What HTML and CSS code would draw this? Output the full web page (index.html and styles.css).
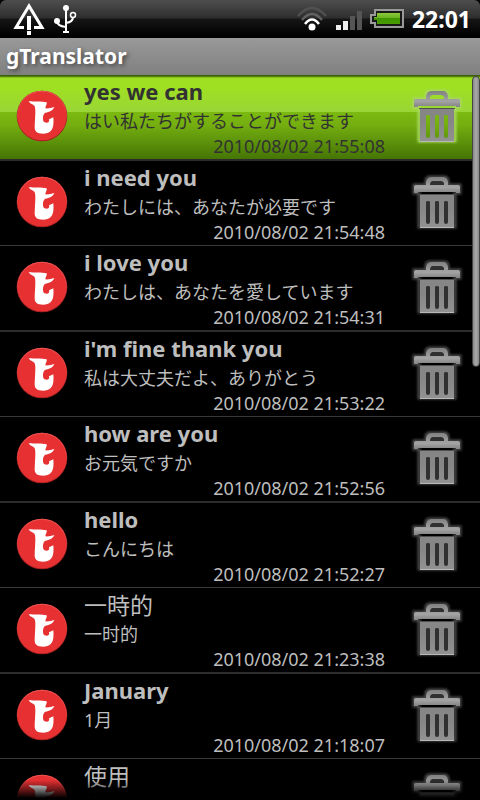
FILE: index.html
```html
<!DOCTYPE html>
<html lang="ja">
<head>
    <meta charset="UTF-8">
    <meta name="viewport" content="width=device-width, initial-scale=1.0">
    <title>gTranslator</title>
    <link rel="stylesheet" href="styles.css">
</head>
<body>

<svg class="defs" aria-hidden="true">
    <defs>
        <linearGradient id="metal" gradientUnits="userSpaceOnUse" x1="0" y1="4" x2="0" y2="55">
            <stop offset="0" stop-color="#808080"/>
            <stop offset="0.2" stop-color="#a4a4a4"/>
            <stop offset="0.3" stop-color="#868686"/>
            <stop offset="0.6" stop-color="#868686"/>
            <stop offset="1" stop-color="#929292"/>
        </linearGradient>
        <linearGradient id="level" x1="0" y1="0" x2="0" y2="1">
            <stop offset="0" stop-color="#8ac83c"/>
            <stop offset="0.5" stop-color="#68b01c"/>
            <stop offset="0.5" stop-color="#3f9400"/>
            <stop offset="1" stop-color="#489c00"/>
        </linearGradient>
        <filter id="glow" x="-20%" y="-20%" width="140%" height="140%">
            <feGaussianBlur stdDeviation="1.2"/>
        </filter>
    </defs>
    <symbol id="logo" viewBox="48 48 156 156">
        <circle cx="126" cy="126" r="76" fill="#a82020"/>
        <circle cx="126" cy="124" r="74" fill="#ec5452"/>
        <circle cx="126" cy="126" r="73" fill="#e63032"/>
        <path fill="#fff" d="M86 81 C98 84 126 80 140 85 C142 91 136 97 136 103 C146 104 154 101 163 99 C159 110 148 114 136 116 C127 121 127 142 134 145 C143 149 150 144 147 136 L160 130 C162 156 160 179 130 179 C110 179 104 172 104 160 C105 130 108 107 104 97 C101 90 90 91 86 81Z"/>
    </symbol>
    <symbol id="trash" viewBox="0 0 54 60">
        <g class="trash-glow" fill="none" stroke-width="3" filter="url(#glow)">
            <path d="M16 12 V8 Q16 4 20 4 H34 Q38 4 38 8 V12 H50 V20 H45 V54 H9 V20 H4 V12Z"/>
        </g>
        <path class="trash-hole" d="M20 8 H34 V12 H20Z M15 28 H39 V51 H15Z"/>
        <path fill="url(#metal)" fill-rule="evenodd" d="M4 20 V14 Q4 12 6 12 H16 V9 Q17 4 22 4 H33 Q37 4 38 9 V12 H48 Q50 12 50 14 V20 H46 V19 H8 V20Z M20 12 H34 V10 Q33 8 31 8 H23 Q20 8 20 12Z"/>
        <path fill="url(#metal)" fill-rule="evenodd" d="M10 22 H44 V55 H10Z M16 29 V49 Q16 51 18 51 Q20 51 20 49 V29 Q20 28 18 28 Q16 28 16 29Z M25 29 V49 Q25 51 27 51 Q29 51 29 49 V29 Q29 28 27 28 Q25 28 25 29Z M34 29 V49 Q34 51 36 51 Q38 51 38 49 V29 Q38 28 36 28 Q34 28 34 29Z"/>
        <path fill="none" stroke="#505050" d="M9 21.500 H45"/>
        <path fill="none" stroke="#b8b8b8" d="M10 54.500 H44"/>
    </symbol>
</svg>

<div class="screen">
    <div class="status-wrap">
        <div class="status-bar">
            <svg class="warn-icon" width="32" height="34" viewBox="0 0 32 34">
                <path fill="none" stroke="#fff" stroke-width="3" d="M11 25.500 H3 L16 4 L29 25.500 H21"/>
                <path fill="#fff" d="M14 14 h4 v14 h-4z M14 29 h4 v4 h-4z"/>
            </svg>
            <svg class="usb-icon" width="24" height="30" viewBox="0 0 24 30">
                <circle cx="13" cy="4" r="3" fill="#fff"/>
                <circle cx="4" cy="17" r="3" fill="#fff"/>
                <circle cx="20" cy="11" r="2.500" fill="none" stroke="#fff" stroke-width="1.500"/>
                <path fill="none" stroke="#fff" stroke-width="2" d="M13 4 V28 M4 17 Q4 22 13 23 M20 13 Q20 18 13 19 M10 28 H16"/>
            </svg>
            <svg class="wifi-icon" width="32" height="26" viewBox="0 0 32 26">
                <g fill="none" stroke-width="2.500">
                    <path stroke="#505050" d="M2 10 Q16 -6 30 10"/>
                    <path stroke="#626262" d="M6 14 Q16 2 26 14"/>
                    <path stroke="#fff" d="M9 18 Q16 9 23 18"/>
                </g>
                <circle cx="16" cy="21" r="3.500" fill="#fff"/>
            </svg>
            <svg class="signal-icon" width="26" height="20" viewBox="0 0 26 20">
                <path fill="#eee" d="M0 14 h5 v5 h-5z M7 10 h5 v9 h-5z"/>
                <path fill="#555" d="M14 5 h5 v14 h-5z M21 0 h5 v19 h-5z"/>
            </svg>
            <svg class="battery-icon" width="34" height="20" viewBox="0 0 34 20">
                <path fill="#181818" stroke="#999" stroke-width="2" d="M5 1 H33 V18 H5 V14 H1 V6 H5Z"/>
                <path fill="url(#level)" d="M7 4 H30 V15 H7 V11 H4 V8 H7Z"/>
            </svg>
            <span class="clock">22:01</span>
        </div>
    </div>
    <h1 class="title-bar">gTranslator</h1>

    <main class="list-area">
        <ul class="history">
            <li class="item selected">
                <svg class="logo"><use href="#logo"/></svg>
                <div class="texts">
                    <h2>yes we can</h2>
                    <p>はい私たちがすることができます</p>
                    <time>2010/08/02 21:55:08</time>
                </div>
                <button class="delete" aria-label="delete"><svg><use href="#trash"/></svg></button>
            </li>
            <li class="item">
                <svg class="logo"><use href="#logo"/></svg>
                <div class="texts">
                    <h2>i need you</h2>
                    <p>わたしには、あなたが必要です</p>
                    <time>2010/08/02 21:54:48</time>
                </div>
                <button class="delete" aria-label="delete"><svg><use href="#trash"/></svg></button>
            </li>
            <li class="item">
                <svg class="logo"><use href="#logo"/></svg>
                <div class="texts">
                    <h2>i love you</h2>
                    <p>わたしは、あなたを愛しています</p>
                    <time>2010/08/02 21:54:31</time>
                </div>
                <button class="delete" aria-label="delete"><svg><use href="#trash"/></svg></button>
            </li>
            <li class="item">
                <svg class="logo"><use href="#logo"/></svg>
                <div class="texts">
                    <h2>i'm fine thank you</h2>
                    <p>私は大丈夫だよ、ありがとう</p>
                    <time>2010/08/02 21:53:22</time>
                </div>
                <button class="delete" aria-label="delete"><svg><use href="#trash"/></svg></button>
            </li>
            <li class="item">
                <svg class="logo"><use href="#logo"/></svg>
                <div class="texts">
                    <h2>how are you</h2>
                    <p>お元気ですか</p>
                    <time>2010/08/02 21:52:56</time>
                </div>
                <button class="delete" aria-label="delete"><svg><use href="#trash"/></svg></button>
            </li>
            <li class="item">
                <svg class="logo"><use href="#logo"/></svg>
                <div class="texts">
                    <h2>hello</h2>
                    <p>こんにちは</p>
                    <time>2010/08/02 21:52:27</time>
                </div>
                <button class="delete" aria-label="delete"><svg><use href="#trash"/></svg></button>
            </li>
            <li class="item">
                <svg class="logo"><use href="#logo"/></svg>
                <div class="texts">
                    <h2 class="cjk">一時的</h2>
                    <p lang="zh-CN">一时的</p>
                    <time>2010/08/02 21:23:38</time>
                </div>
                <button class="delete" aria-label="delete"><svg><use href="#trash"/></svg></button>
            </li>
            <li class="item">
                <svg class="logo"><use href="#logo"/></svg>
                <div class="texts">
                    <h2>January</h2>
                    <p>1月</p>
                    <time>2010/08/02 21:18:07</time>
                </div>
                <button class="delete" aria-label="delete"><svg><use href="#trash"/></svg></button>
            </li>
            <li class="item">
                <svg class="logo"><use href="#logo"/></svg>
                <div class="texts">
                    <h2 class="cjk">使用</h2>
                    <p>使用</p>
                </div>
                <button class="delete" aria-label="delete"><svg><use href="#trash"/></svg></button>
            </li>
        </ul>
        <div class="scroll-thumb"></div>
        <div class="fade"></div>
    </main>
</div>

</body>
</html>
```
FILE: styles.css
```css
* {
    box-sizing: border-box;
}
body {
    margin: 0;
    background-color: #000;
    color: #bebebe;
    font-family: "Noto Sans", "Noto Sans CJK JP", sans-serif;
}
.defs {
    position: absolute;
    width: 0;
    height: 0;
}
.screen {
    display: flex;
    flex-direction: column;
    height: 100vh;
    overflow: hidden;
}

/* status bar */
.status-wrap {
    flex: none;
    background-color: #000;
}
.status-bar {
    display: flex;
    align-items: center;
    height: 38px;
    padding: 0 9px 0 13px;
    border-radius: 6px 6px 0 0;
    background: linear-gradient(#4e4e4e 0, #2e2e2e 18px, #161616 19px, #000 36px);
}
.usb-icon {
    margin-left: 8px;
}
.wifi-icon {
    margin-left: auto;
}
.signal-icon {
    margin: 4px 8px 0 8px;
}
.clock {
    margin-left: 8px;
    color: #fff;
    font-size: 23px;
    font-weight: bold;
    line-height: 38px;
}

.title-bar {
    flex: none;
    height: 37px;
    margin: 0;
    padding: 0 6px;
    background: linear-gradient(#999, #808080);
    color: #fff;
    font-size: 21px;
    line-height: 36px;
    text-shadow: 2px 2px 4px #444;
}

/* history list */
.list-area {
    position: relative;
    flex: 1;
    min-height: 0;
    overflow: hidden;
}
.history {
    margin: 0;
    padding: 0;
    list-style: none;
}
.item {
    --glow: #4c4c4c;
    --hole: #303030;
    display: flex;
    align-items: center;
    height: 85px;
    padding: 0 16px;
    border-bottom: 1px solid #383838;
}
.item:nth-child(odd) {
    height: 86px;
    border-bottom: 2px solid #2c2c2c;
}
.item.selected {
    --glow: #a8d860;
    --hole: transparent;
    background: linear-gradient(#3c6008 0, #3c6008 1px, #9fe022 3px, #9fe022 12px, #99d636 37px, #7cba10 37px, #74ae10 50px, #457505 84px);
    color: #323232;
}
.logo {
    flex: none;
    width: 52px;
    height: 52px;
    margin-bottom: 2px;
}
.texts {
    display: flex;
    flex-direction: column;
    align-self: flex-start;
    width: 301px;
    margin-left: 16px;
    padding-top: 2px;
}
.texts h2 {
    margin: 0 0 3px;
    font-size: 22px;
    line-height: 28px;
}
.texts h2.cjk {
    font-family: "Noto Sans CJK JP", sans-serif;
    font-size: 23px;
    font-weight: normal;
}
.texts p {
    margin: 0;
    font-size: 18px;
    line-height: 26px;
}
.texts time {
    align-self: flex-end;
    font-size: 18px;
    line-height: 24px;
}
.delete {
    flex: none;
    width: 54px;
    height: 60px;
    margin-left: auto;
    padding: 0;
    border: none;
    background: none;
}
.delete svg {
    display: block;
    width: 54px;
    height: 60px;
}
.trash-glow {
    stroke: var(--glow);
}
.trash-hole {
    fill: var(--hole);
}

.scroll-thumb {
    position: absolute;
    top: 1px;
    right: 0;
    width: 8px;
    height: 291px;
    border: 1px solid #444;
    border-radius: 4px;
    background: linear-gradient(to right, #888, #aaa, #888);
}
.fade {
    position: absolute;
    right: 0;
    bottom: 0;
    left: 0;
    height: 20px;
    background: linear-gradient(transparent, #000 18px);
}
```
